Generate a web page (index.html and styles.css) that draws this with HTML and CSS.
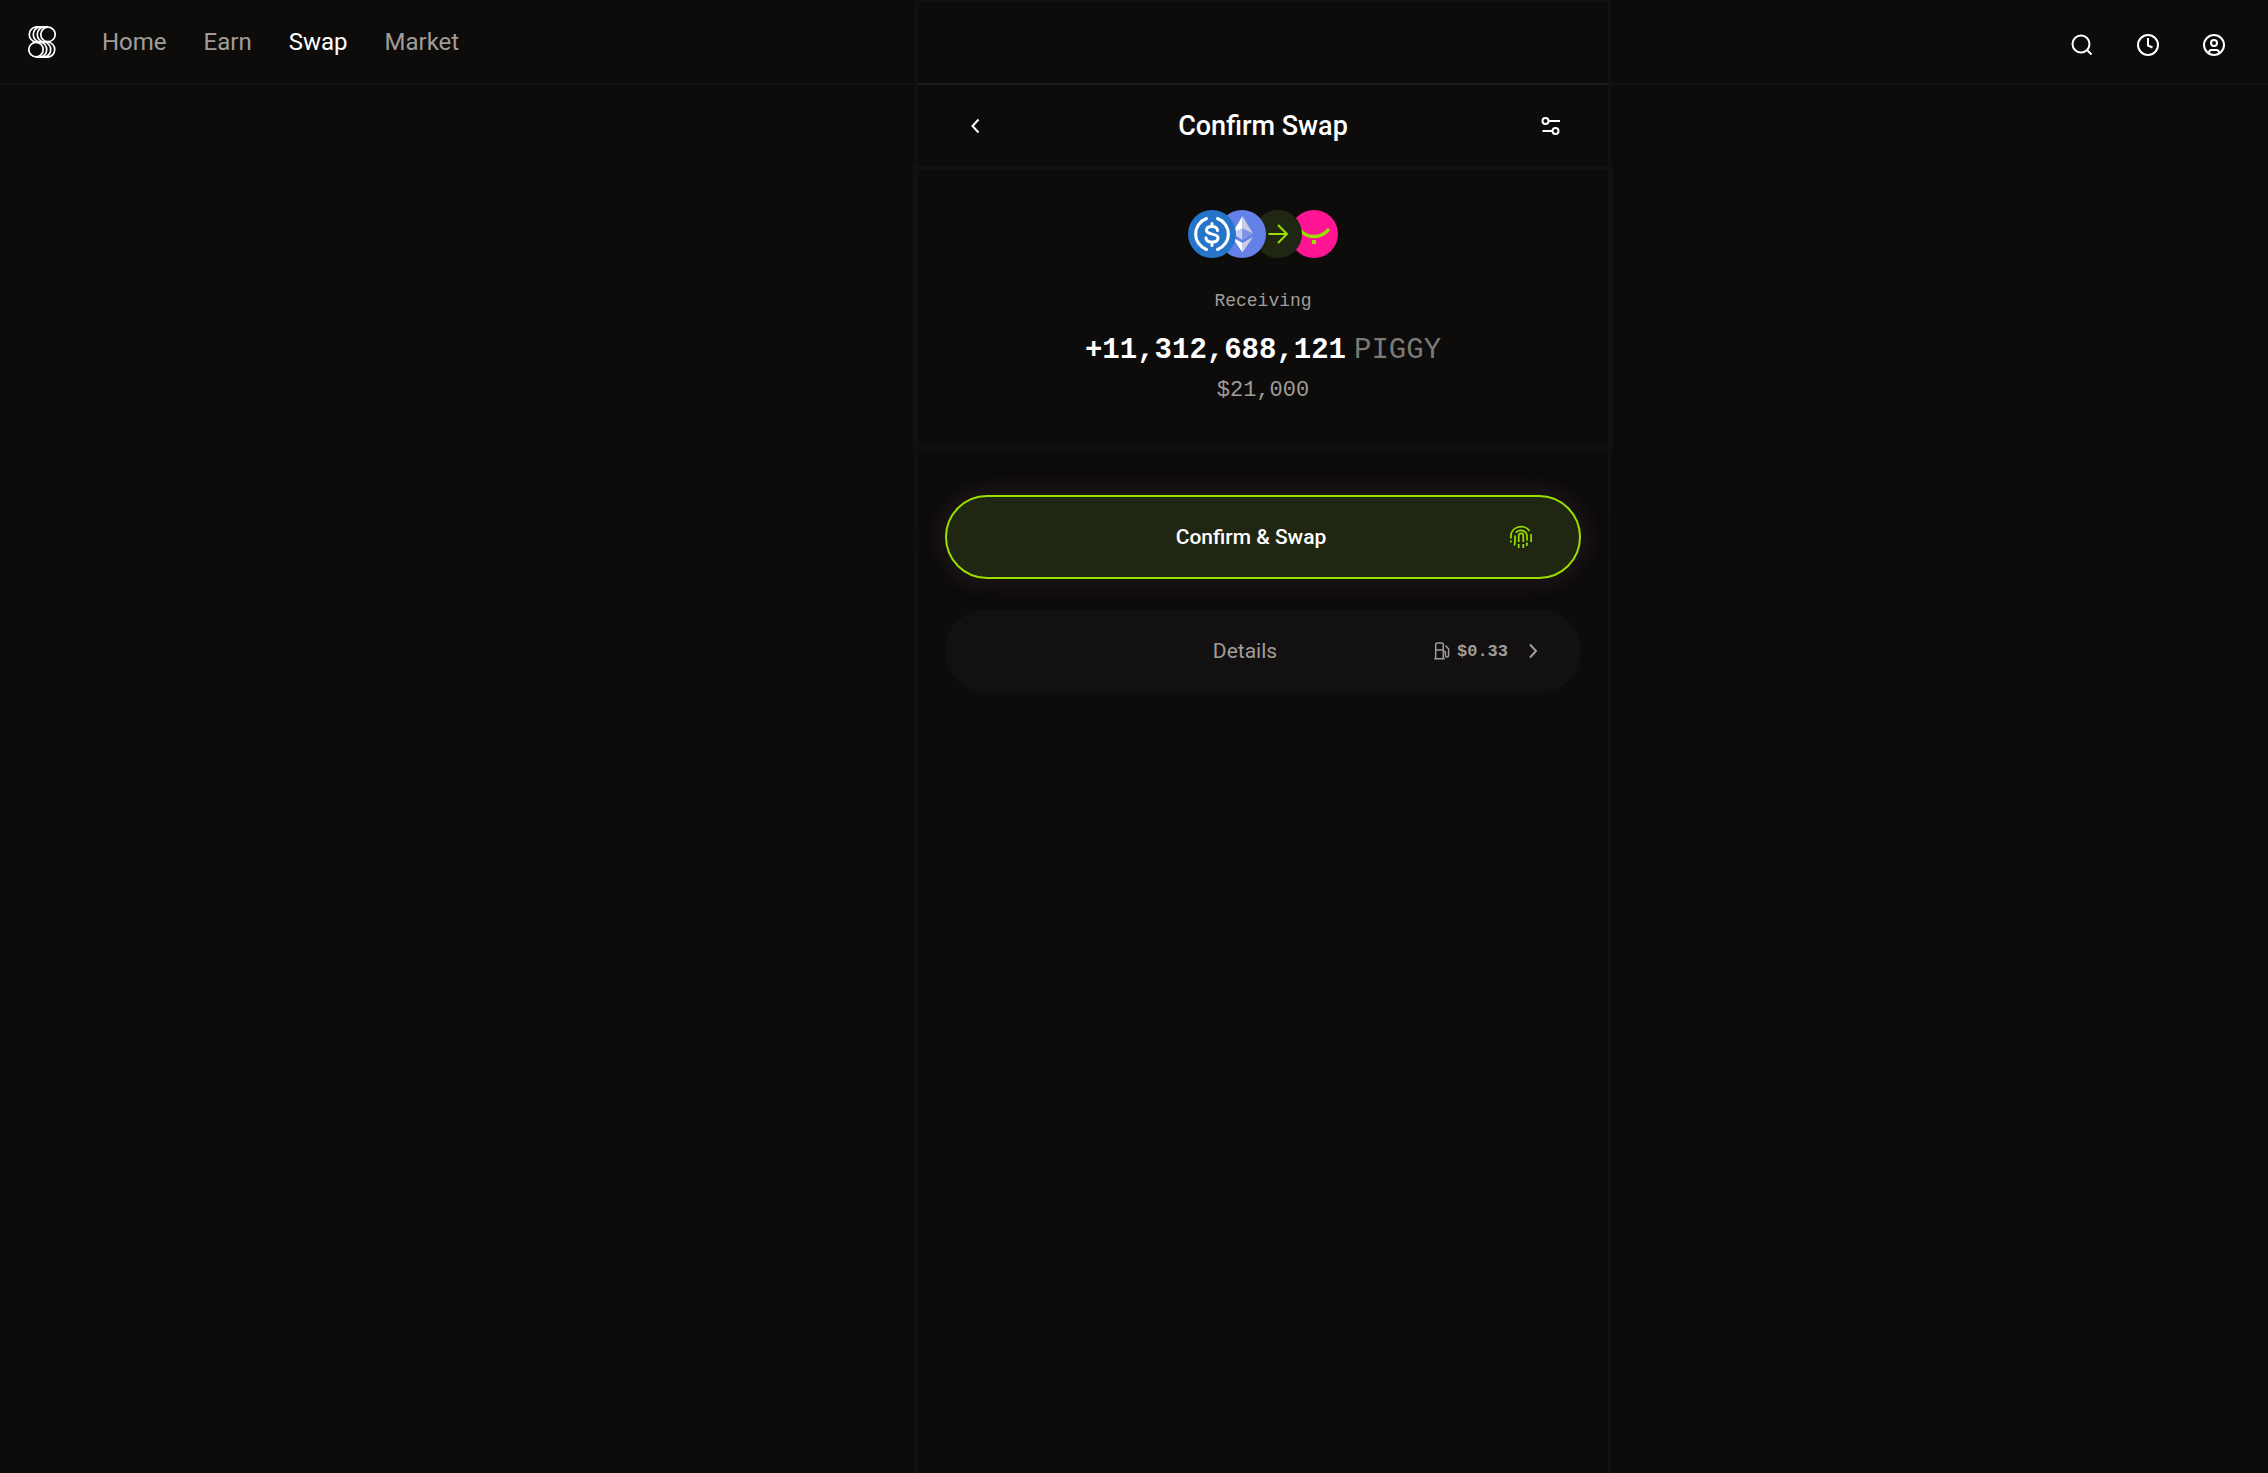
FILE: index.html
```html
<!DOCTYPE html>
<html lang="en">
<head>
    <meta charset="UTF-8">
    <meta name="viewport" content="width=device-width, initial-scale=1.0">
    <title>Confirm Swap</title>
    <link rel="stylesheet" href="styles.css">
</head>
<body>

    <header class="topbar">
        <a class="logo" href="#" aria-label="Home page">
            <svg width="28" height="32" viewBox="0 0 28 32" fill="none" stroke="#fff" stroke-width="1.7">
                <path d="M8 .9h12M8 16h12M8 31.1h12"/>
                <path d="M8 16A7.600 7.600 0 0 1 8 .9M12 16A7.600 7.600 0 0 1 12 .9M16 16A7.600 7.600 0 0 1 16 .9"/>
                <circle cx="20" cy="8.400" r="7.200"/>
                <circle cx="8" cy="23.600" r="7.200"/>
                <path d="M12 16a7.600 7.600 0 0 1 0 15.100M16 16a7.600 7.600 0 0 1 0 15.100M20 16a7.600 7.600 0 0 1 0 15.100"/>
            </svg>
        </a>
        <nav class="nav">
            <a href="#">Home</a>
            <a href="#">Earn</a>
            <a href="#" class="active">Swap</a>
            <a href="#">Market</a>
        </nav>
        <div class="tools">
            <button aria-label="Search">
                <svg width="24" height="24" viewBox="0 0 24 24" fill="none" stroke="#fff" stroke-width="2"><circle cx="11" cy="11" r="8.500"/><path d="M17 17l4.500 4.500"/></svg>
            </button>
            <button aria-label="History">
                <svg width="24" height="24" viewBox="0 0 24 24" fill="none" stroke="#fff" stroke-width="2"><circle cx="12" cy="12" r="10"/><path d="M12 5v7.500l4.500 2"/></svg>
            </button>
            <button aria-label="Account">
                <svg width="24" height="24" viewBox="0 0 24 24" fill="none" stroke="#fff" stroke-width="2"><circle cx="12" cy="12" r="10"/><circle cx="12" cy="10" r="3"/><path d="M7 20c0-2.500 1-3 2.500-3h5c1.500 0 2.500.500 2.500 3"/></svg>
            </button>
        </div>
    </header>

    <main class="page">
        <div class="panel">
            <div class="panel-head">
                <button aria-label="Back">
                    <svg width="24" height="24" viewBox="0 0 24 24" fill="none" stroke="#fff" stroke-width="2"><path d="M14.500 5.500L8.500 12l6 6.500"/></svg>
                </button>
                <h1>Confirm Swap</h1>
                <button aria-label="Settings">
                    <svg width="24" height="24" viewBox="0 0 24 24" fill="none" stroke="#fff" stroke-width="2"><circle cx="7.500" cy="7" r="3"/><path d="M10.500 7H22M4.500 17h10"/><circle cx="17.500" cy="17" r="3"/></svg>
                </button>
            </div>

            <section class="summary">
                <div class="tokens">
                    <svg class="token usdc" viewBox="0 0 48 48">
                        <circle cx="24" cy="24" r="24" fill="#2775ca"/>
                        <g fill="none" stroke="#fff" stroke-width="3" stroke-linecap="round">
                            <path d="M18.500 8.500a16.500 16.500 0 0 0 0 31M29.500 8.500a16.500 16.500 0 0 1 0 31"/>
                            <path d="M24 13.500v3M24 32v3.500M29.500 20.500c0-2.500-2.500-4-5.500-4s-5.500 1.300-5.500 3.800c0 5.200 11.500 2.400 11.500 7.700 0 2.600-2.600 4-6 4s-6-1.500-6-4.300"/>
                        </g>
                    </svg>
                    <svg class="token eth" viewBox="0 0 48 48">
                        <circle cx="24" cy="24" r="24" fill="#6481e7"/>
                        <path d="M24.500 6v12.500L14 23.500z" fill="#fff"/>
                        <path d="M24.500 6v12.500L35 23.500z" fill="#c9cfe0"/>
                        <path d="M14 23.500l10.500-5v11.500z" fill="#c5cfee"/>
                        <path d="M35 23.500l-10.500-5v11.500z" fill="#7f96e8"/>
                        <path d="M14 27l10.500 6v9.500z" fill="#fff"/>
                        <path d="M35 27l-10.500 6v9.500z" fill="#c9cfe0"/>
                    </svg>
                    <svg class="token arrow" viewBox="0 0 48 48">
                        <circle cx="24" cy="24" r="24" fill="#1f2612"/>
                        <path d="M14.500 24h18M24 15l9 9-9 9" fill="none" stroke="#99e000" stroke-width="2"/>
                    </svg>
                    <svg class="token piggy" viewBox="0 0 48 48">
                        <circle cx="24" cy="24" r="24" fill="#ff1493"/>
                        <path d="M9 19c8 10 22 10 30 0" fill="none" stroke="#99e000" stroke-width="3.500"/>
                        <path d="M22 30h4v4h-4z" fill="#99e000"/>
                    </svg>
                </div>
                <p class="label">Receiving</p>
                <p class="amount"><strong>+11,312,688,121</strong><span>PIGGY</span></p>
                <p class="fiat">$21,000</p>
            </section>

            <section class="actions">
                <button class="pill confirm">
                    <span class="pill-text">Confirm &amp; Swap</span>
                    <svg width="24" height="24" viewBox="0 0 24 24" fill="none" stroke="#99e000" stroke-width="1.700">
                        <path d="M1.900 13.500V11A10.100 9.500 0 0 1 20.500 6M22.100 9v8M1.900 15.500v2"/>
                        <path d="M6 10.500v5c0 2-.2 3.500-.6 5M6.800 7.800A6.200 6 0 0 1 18 11v4.500M18 17.500l-.3 3.500"/>
                        <path d="M9.700 23v-4M9.700 17v-6a2.300 2.300 0 0 1 4.600-.5V17M14.300 19v4"/>
                    </svg>
                </button>
                <button class="pill details">
                    <span class="pill-text">Details</span>
                    <span class="fee">
                        <svg width="16" height="18" viewBox="0 0 16 18" fill="none" stroke="#a09d98" stroke-width="1.500"><path d="M1.700 16.500v-14q0-1.500 1.500-1.500h4.600q1.500 0 1.500 1.500v14M.2 16.700h10.600M1.700 8h7.600M9.300 9.500h1.200q1 0 1 1v3q0 1.500 1.500 1.500t1.600-1.500V7L11.500 3.500"/></svg>
                        <span class="fee-amount">$0.33</span>
                        <svg width="24" height="24" viewBox="0 0 24 24" fill="none" stroke="#a09d98" stroke-width="2"><path d="M9 5.500l6 6.500-6 6.500"/></svg>
                    </span>
                </button>
            </section>
        </div>
    </main>

</body>
</html>
```
FILE: styles.css
```css
* {
    box-sizing: border-box;
}

/* the top bar and the page share one grid cell, so the panel runs up behind the bar */
body {
    margin: 0;
    min-height: 100vh;
    display: grid;
    background-color: #0d0c0a;
    color: #fff;
    font-family: Roboto, sans-serif;
}

h1, p {
    margin: 0;
}

button {
    padding: 0;
    border: none;
    background: none;
    color: inherit;
    font-family: inherit;
    cursor: pointer;
}

svg {
    display: block;
    flex: none;
}

.topbar {
    grid-area: 1 / 1;
    z-index: 1;
    display: flex;
    align-items: center;
    height: 85px;
    padding: 0 42px 0 28px;
    border-bottom: 2px solid #131211;
}

.nav {
    display: flex;
    gap: 37px;
    margin-left: 46px;
    font-size: 24px;
}

.nav a {
    color: #a09d98;
    text-decoration: none;
}

.nav .active {
    color: #fff;
}

.tools {
    display: flex;
    gap: 42px;
    margin-left: auto;
    padding-top: 6px;
}

.page {
    grid-area: 1 / 1;
    display: flex;
    justify-content: center;
    padding-left: 258px;
}

.panel {
    width: 100%;
    max-width: 696px;
    padding-top: 81px;
    border: 3px solid #121112;
    border-top-width: 2px;
    border-bottom: none;
}

.panel-head {
    position: relative;
    z-index: 2;
    display: flex;
    align-items: center;
    justify-content: space-between;
    height: 83px;
    padding: 0 46px;
    border-top: 2px solid #1d1c1a;
}

.panel-head h1 {
    font-size: 27px;
    font-weight: 500;
}

.summary {
    display: flex;
    flex-direction: column;
    align-items: center;
    height: 283px;
    margin: 0 -5px;
    padding-top: 40px;
    border: 4px solid #121112;
    font-family: "Liberation Mono", monospace;
}

.tokens {
    display: flex;
}

.token {
    position: relative;
    width: 48px;
    height: 48px;
}

.usdc {
    z-index: 3;
}

.eth {
    z-index: 2;
    margin-left: -18px;
}

.arrow {
    z-index: 1;
    margin-left: -12px;
}

.piggy {
    margin-left: -12px;
}

.label {
    margin-top: 31px;
    font-size: 18px;
    line-height: 24px;
    color: #a09d98;
}

.amount {
    display: flex;
    gap: 8px;
    margin-top: 20px;
    font-size: 29px;
    line-height: 36px;
}

.amount span {
    color: #7c7a77;
}

.fiat {
    margin-top: 9px;
    font-size: 22px;
    line-height: 26px;
    color: #a09d98;
}

.actions {
    display: flex;
    flex-direction: column;
    gap: 30px;
    padding: 46px 27px;
}

.pill {
    display: flex;
    align-items: center;
    height: 84px;
    border-radius: 42px;
    font-size: 21px;
    font-weight: 500;
}

.pill-text {
    flex: 1;
}

.confirm {
    padding: 0 46px;
    border: 2px solid #99e000;
    background-color: #1f2612;
    box-shadow: 0 0 20px 2px #1d1816, 0 0 16px 12px #131011;
}

.details {
    display: grid;
    padding: 0 36px 0 48px;
    background-color: #121011;
    color: #a09d98;
    font-weight: 400;
}

.details .pill-text {
    grid-area: 1 / 1;
    margin-right: 48px;
}

.fee {
    grid-area: 1 / 1;
    justify-self: end;
    display: flex;
    align-items: center;
    gap: 7px;
}

.fee-amount {
    margin-right: 6px;
    font-family: "Liberation Mono", monospace;
    font-size: 17px;
    font-weight: bold;
}
```
